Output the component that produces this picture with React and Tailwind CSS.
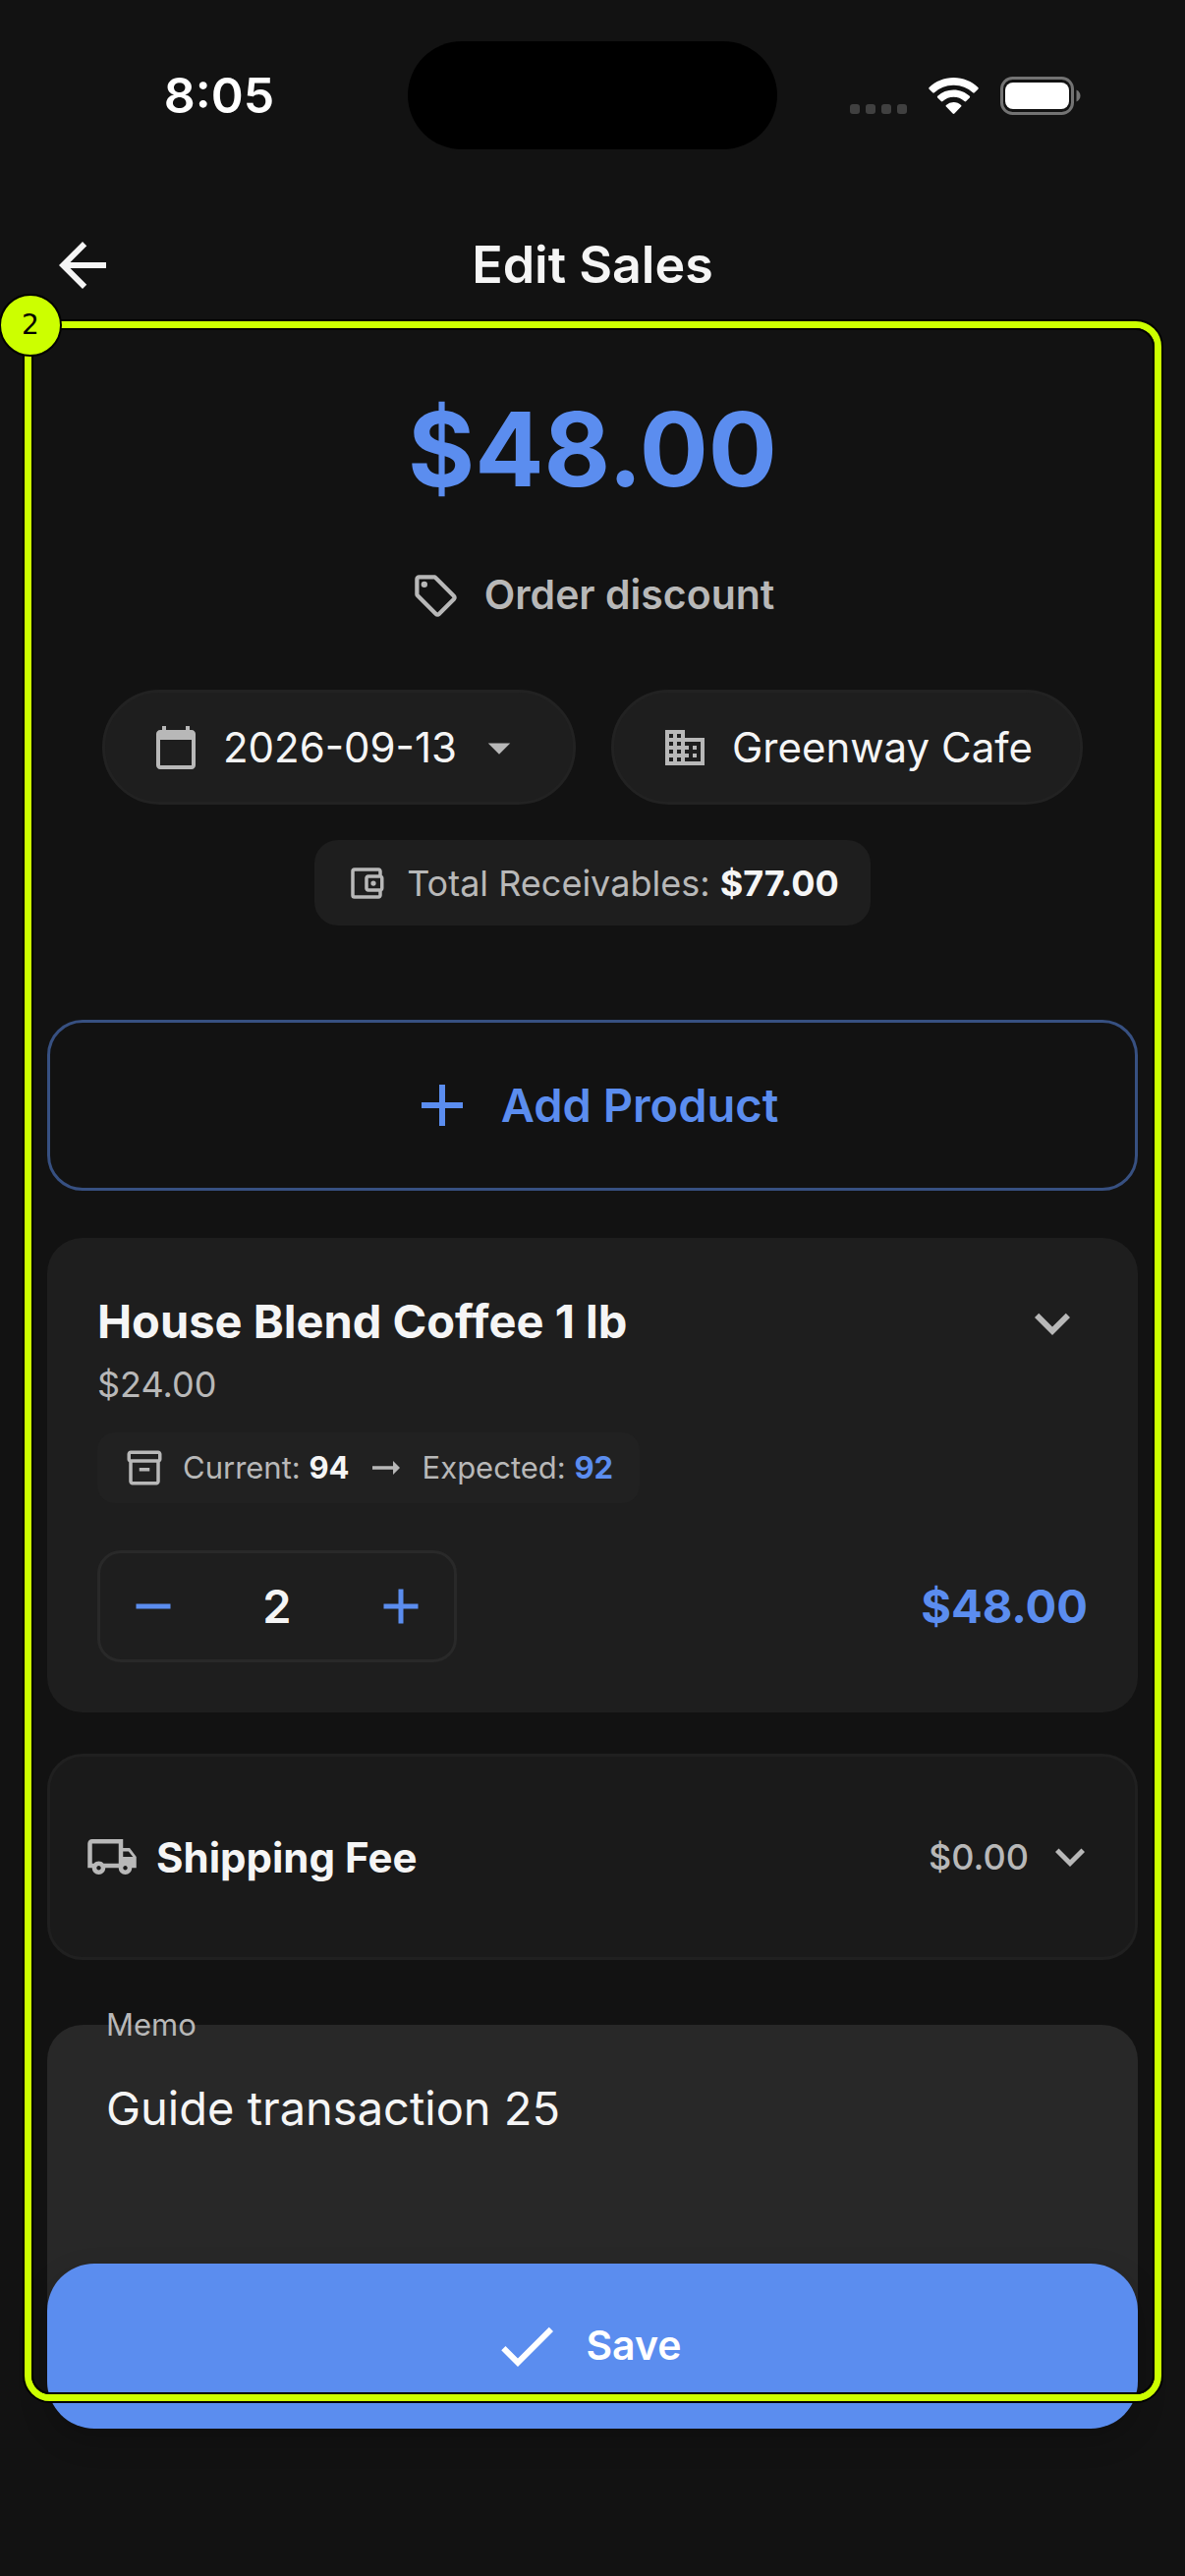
import React, { useState } from 'react';
import {
  MdArrowBack,
  MdOutlineSell,
  MdCalendarToday,
  MdArrowDropDown,
  MdBusiness,
  MdOutlineAccountBalanceWallet,
  MdAdd,
  MdRemove,
  MdExpandMore,
  MdOutlineInventory2,
  MdArrowRightAlt,
  MdOutlineLocalShipping,
  MdCheck,
} from 'react-icons/md';

const UNIT_PRICE = 24;
const STOCK = 94;

const money = (value) => `$${value.toFixed(2)}`;

function StatusBar() {
  return (
    <div className="grid h-[186px] grid-cols-3 items-start pt-[42px] font-semibold text-white">
      <div className="flex h-[110px] items-center justify-center pl-11 text-[50px]">8:05</div>
      <div className="h-[110px] w-[376px] justify-self-center rounded-full bg-black" />
      <div className="flex h-[110px] items-center justify-end gap-[22px] pr-[106px]">
        <svg className="mt-7 h-[10px] w-[58px]" viewBox="0 0 58 10" fill="#404040">
          <rect x="0" width="10" height="10" rx="3" />
          <rect x="16" width="10" height="10" rx="3" />
          <rect x="32" width="10" height="10" rx="3" />
          <rect x="48" width="10" height="10" rx="3" />
        </svg>
        {/* Wi-Fi */}
        <svg className="h-[37px] w-[51px]" viewBox="0 0 51 37" fill="white">
          <path d="M25.5 0C35.2 0 44 3.8 50.4 10c.5.5.5 1.2 0 1.7l-3.6 3.6c-.5.5-1.2.5-1.7 0A28 28 0 0 0 25.5 7.7 28 28 0 0 0 5.9 15.3c-.5.5-1.2.5-1.7 0L.6 11.7c-.5-.5-.5-1.2 0-1.7C7 3.8 15.8 0 25.5 0z" />
          <path d="M25.5 12.5c6.3 0 12 2.4 16.3 6.3.5.5.5 1.2 0 1.7l-3.6 3.6c-.5.5-1.2.5-1.7 0a16.3 16.3 0 0 0-22 0c-.5.5-1.2.5-1.7 0l-3.6-3.6c-.5-.5-.5-1.2 0-1.7a24 24 0 0 1 16.3-6.3z" />
          <path d="M25.5 25c2.9 0 5.6 1.1 7.6 2.9.5.5.5 1.2 0 1.7l-6.7 6.9c-.5.5-1.3.5-1.8 0l-6.7-6.9c-.5-.5-.5-1.2 0-1.7a11.5 11.5 0 0 1 7.6-2.9z" />
        </svg>
        {/* Battery */}
        <svg className="h-[39px] w-[82px]" viewBox="0 0 82 39">
          <rect x="1.5" y="1.5" width="72" height="36" rx="11" fill="none" stroke="#737373" strokeWidth="3" />
          <rect x="5" y="6" width="65" height="27" rx="8" fill="white" />
          <path d="M77.5 13.5c2.5 1 4 3.4 4 6s-1.5 5-4 6z" fill="#737373" />
        </svg>
      </div>
    </div>
  );
}

function Header() {
  return (
    <header className="grid h-[168px] grid-cols-[72px_1fr_72px] items-center px-12">
      <button type="button" aria-label="Back">
        <MdArrowBack className="size-[72px]" />
      </button>
      <h1 className="text-center text-[52px] font-semibold">Edit Sales</h1>
    </header>
  );
}

function OrderInfo({ total }) {
  return (
    <section className="flex flex-col items-center">
      <p className="text-[104px] leading-[126px] font-bold text-[#5b8def]">{money(total)}</p>

      <button
        type="button"
        className="mt-12 flex h-19 items-center gap-6 text-[41px] font-semibold text-[#b8b8b8]"
      >
        <MdOutlineSell className="size-[51px]" />
        Order discount
      </button>

      <div className="mt-[58px] flex justify-center gap-9 text-[42px]">
        <button
          type="button"
          className="flex h-[117px] items-center rounded-full border-3 border-[#222222] bg-[#1e1e1e] px-12"
        >
          <MdCalendarToday className="mr-6 size-12 text-[#b8b8b8]" />
          2026-09-13
          <MdArrowDropDown className="ml-4 size-[54px] text-[#b8b8b8]" />
        </button>
        <button
          type="button"
          className="flex h-[117px] items-center gap-6 rounded-full border-3 border-[#222222] bg-[#1e1e1e] px-12"
        >
          <MdBusiness className="size-12 text-[#b8b8b8]" />
          Greenway Cafe
        </button>
      </div>

      <div className="mt-9 flex h-[87px] items-center gap-5 rounded-3xl bg-[#1e1e1e] px-8 text-[36px] text-[#b8b8b8]">
        <MdOutlineAccountBalanceWallet className="size-[42px]" />
        <p>
          Total Receivables: <span className="font-bold text-[#f5f5f5]">$77.00</span>
        </p>
      </div>
    </section>
  );
}

function ProductCard({ quantity, onChange }) {
  return (
    <section className="mt-12 rounded-[36px] bg-[#1e1e1e] p-[51px]">
      <div className="flex items-start justify-between">
        <div>
          <h2 className="text-[47px] leading-[68px] font-bold">House Blend Coffee 1 lb</h2>
          <p className="mt-1.5 text-[36px] leading-[48px] text-[#b8b8b8]">{money(UNIT_PRICE)}</p>
        </div>
        <button type="button" aria-label="Show product details" className="text-[#b8b8b8]">
          <MdExpandMore className="size-[72px]" />
        </button>
      </div>

      <div className="mt-[25px] flex h-[72px] w-fit items-center gap-4 rounded-[18px] bg-[#212121] px-[27px] text-[31px] text-[#b8b8b8]">
        <MdOutlineInventory2 className="mr-0.5 size-[42px]" />
        <p>
          Current: <span className="font-bold text-[#f5f5f5]">{STOCK}</span>
        </p>
        <MdArrowRightAlt className="size-[42px]" />
        <p>
          Expected: <span className="font-bold text-[#5b8def]">{STOCK - quantity}</span>
        </p>
      </div>

      <div className="mt-12 flex items-center justify-between">
        <div className="flex h-[114px] items-center rounded-3xl border-3 border-[#292929] text-[#5b8def]">
          <button
            type="button"
            aria-label="Decrease quantity"
            className="px-6"
            onClick={() => onChange(Math.max(1, quantity - 1))}
          >
            <MdRemove className="size-[60px]" />
          </button>
          <input
            type="text"
            inputMode="numeric"
            aria-label="Quantity"
            className="w-36 text-center text-[47px] font-semibold text-[#f5f5f5] outline-none"
            value={quantity}
            onChange={(e) => onChange(Number(e.target.value) || 0)}
          />
          <button
            type="button"
            aria-label="Increase quantity"
            className="px-6"
            onClick={() => onChange(quantity + 1)}
          >
            <MdAdd className="size-[60px]" />
          </button>
        </div>
        <p className="text-[47px] font-bold text-[#5b8def]">{money(quantity * UNIT_PRICE)}</p>
      </div>
    </section>
  );
}

// Numbered outline that highlights the form
function StepHighlight() {
  return (
    <div className="pointer-events-none absolute top-[325px] right-[22px] bottom-[176px] left-[23px] rounded-[28px] border-2 border-black">
      <div className="h-full rounded-[26px] border-7 border-[#ccff00]">
        <div className="h-full rounded-[19px] border-2 border-black" />
      </div>
      <span className="absolute -top-7 -left-[26px] flex size-16 items-center justify-center rounded-full border-2 border-black bg-[#ccff00] font-['DejaVu_Sans'] text-[28px] text-black">
        2
      </span>
    </div>
  );
}

function App() {
  const [quantity, setQuantity] = useState(2);
  const [memo, setMemo] = useState('Guide transaction 25');

  return (
    <div className="relative min-h-screen bg-[#121212] font-['Inter',sans-serif] text-[#f5f5f5]">
      <StatusBar />
      <Header />

      <main className="px-12 pt-10">
        <OrderInfo total={quantity * UNIT_PRICE} />

        <button
          type="button"
          className="mt-24 flex h-[174px] w-full items-center justify-center gap-6 rounded-[36px] border-3 border-[#375081] text-[47px] font-semibold text-[#5b8def]"
        >
          <MdAdd className="size-[72px]" />
          Add Product
        </button>

        <ProductCard quantity={quantity} onChange={setQuantity} />

        <button
          type="button"
          className="mt-[42px] flex h-[210px] w-full items-center rounded-[36px] border-3 border-[#202020] bg-[#1a1a1a] px-9"
        >
          <MdOutlineLocalShipping className="size-[54px] text-[#b8b8b8]" />
          <span className="ml-[18px] flex-1 text-left text-[42px] font-bold">Shipping Fee</span>
          <span className="text-[36px] font-medium text-[#b8b8b8]">$0.00</span>
          <MdExpandMore className="ml-3 size-[60px] text-[#b8b8b8]" />
        </button>

        <div className="relative mt-[66px]">
          <label htmlFor="memo" className="absolute -top-5 left-15 text-[31px] leading-10 text-[#b8b8b8]">
            Memo
          </label>
          <textarea
            id="memo"
            name="memo"
            className="block h-[340px] w-full resize-none rounded-[36px] bg-[#282828] px-15 pt-12 text-[47px] leading-[74px] outline-none"
            value={memo}
            onChange={(e) => setMemo(e.target.value)}
          />
        </div>
      </main>

      {/* Floating save action */}
      <button
        type="button"
        className="absolute inset-x-12 bottom-[150px] flex h-[168px] items-center justify-center gap-6 rounded-[48px] bg-[#5b8def] pr-3 text-[41px] font-semibold text-white shadow-[0_12px_30px_rgba(0,0,0,0.2)]"
      >
        <MdCheck className="size-[72px]" />
        Save
      </button>

      <StepHighlight />
    </div>
  );
}

export default App;
